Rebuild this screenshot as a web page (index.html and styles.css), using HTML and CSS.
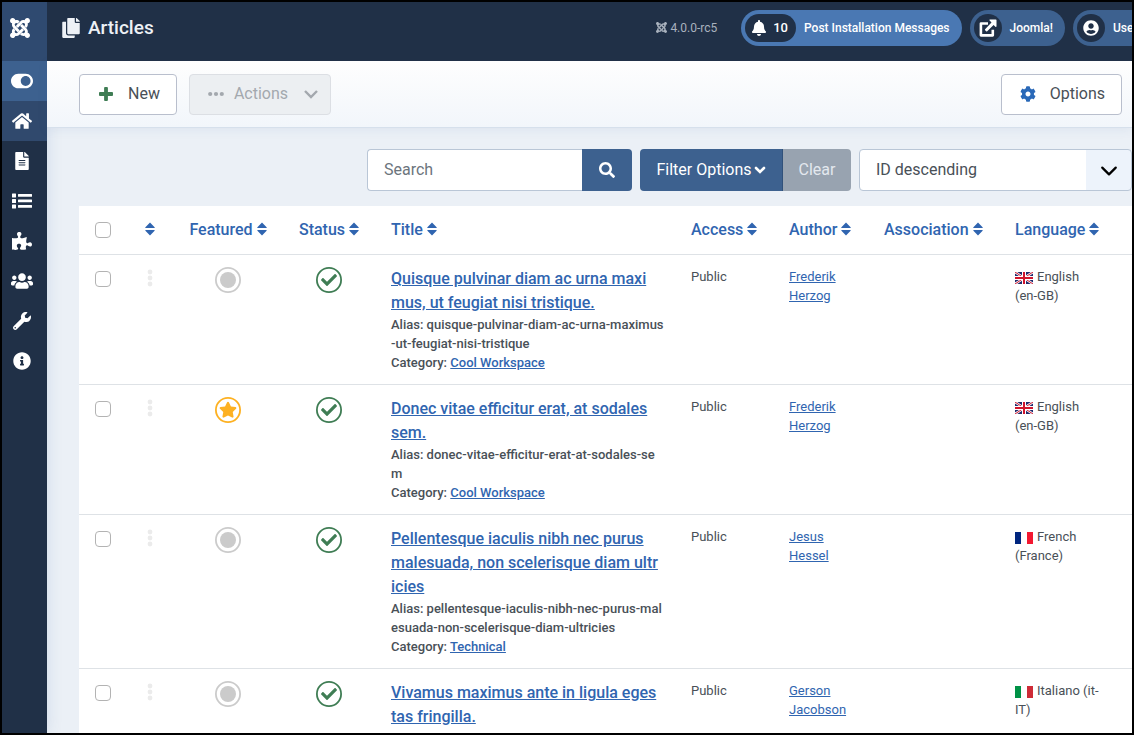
FILE: index.html
```html
<!DOCTYPE html>
<html lang="en">
<head>
<meta charset="utf-8">
<meta name="viewport" content="width=device-width, initial-scale=1">
<title>Articles</title>
<link rel="stylesheet" href="styles.css">
</head>
<body>
<svg class="sprite" aria-hidden="true">
  <symbol id="joomla" viewBox="0 32 448 448"><path d="M.6 92.1C.6 58.8 27.4 32 60.4 32c30 0 54.5 21.9 59.2 50.2 32.6-7.6 67.1.6 96.5 30l-44.3 44.3c-20.5-20.5-42.6-16.3-55.4-3.5-14.3 14.3-14.3 37.9 0 52.2l99.5 99.5-44 44.3c-87.7-87.2-49.7-49.7-99.8-99.7-26.8-26.5-35-64.8-24.8-98.9C20.4 144.6.6 120.7.6 92.1zm129.5 116.4l44.3 44.3c10-10 89.7-89.7 99.7-99.8 14.3-14.3 37.6-14.3 51.9 0 12.8 12.8 17 35-3.5 55.4l44 44.3c31.2-31.2 38.5-67.6 28.9-101.2 29.2-4.1 51.9-29.2 51.9-59.5 0-33.2-26.8-60.1-59.8-60.1-30.3 0-55.4 22.5-59.5 51.6-33.8-9.9-71.7-1.5-98.3 25.1-18.3 19.1-71.1 71.5-99.6 99.9zm266.3 152.2c8.2-32.7-.9-68.5-26.3-93.9-11.8-12.2 5 4.7-99.5-99.7l-44.3 44.3 99.7 99.7c14.3 14.3 14.3 37.6 0 51.9-12.8 12.8-35 17-55.4-3.5l-44 44.3c27.6 30.2 68 38.8 102.7 28 5.5 27.4 29.7 48.1 58.9 48.1 33 0 59.8-26.8 59.8-60.1 0-30.2-22.5-55-51.6-59.1zm-84.3-53.1l-44-44.3c-87 86.4-50.4 50.4-99.7 99.8-14.3 14.3-37.6 14.3-51.9 0-13.1-13.4-16.9-35.3 3.2-55.4l-44-44.3c-30.2 30.2-38 65.2-29.5 98.3-26.7 6-46.2 29.9-46.2 58.2C0 453.2 26.8 480 59.8 480c28.6 0 52.5-19.8 58.6-46.7 32.7 8.2 68.5-.6 94.2-26 32.1-32 12.2-12.4 99.5-99.7z"/></symbol>
  <symbol id="toggle" viewBox="0 0 576 512"><path d="M384 64H192C86 64 0 150 0 256s86 192 192 192h192c106 0 192-86 192-192S490 64 384 64zm0 320c-70.8 0-128-57.3-128-128 0-70.8 57.3-128 128-128 70.8 0 128 57.3 128 128 0 70.8-57.3 128-128 128z"/></symbol>
  <symbol id="home" viewBox="0 0 576 512"><path d="M280.37 148.26L96 300.11V464a16 16 0 0 0 16 16l112.06-.29a16 16 0 0 0 15.92-16V368a16 16 0 0 1 16-16h64a16 16 0 0 1 16 16v95.64a16 16 0 0 0 16 16.05L464 480a16 16 0 0 0 16-16V300L295.67 148.26a12.19 12.19 0 0 0-15.3 0zM571.6 251.47L488 182.56V44.05a12 12 0 0 0-12-12h-56a12 12 0 0 0-12 12v72.61L318.47 43a48 48 0 0 0-61 0L4.34 251.47a12 12 0 0 0-1.6 16.9l25.5 31A12 12 0 0 0 45.15 301l235.22-193.74a12.19 12.19 0 0 1 15.3 0L530.9 301a12 12 0 0 0 16.9-1.6l25.5-31a12 12 0 0 0-1.7-16.93z"/></symbol>
  <symbol id="file" viewBox="0 0 384 512"><path d="M224 136V0H24C10.7 0 0 10.7 0 24v464c0 13.3 10.7 24 24 24h336c13.3 0 24-10.7 24-24V160H248c-13.2 0-24-10.8-24-24zm64 236c0 6.6-5.4 12-12 12H108c-6.6 0-12-5.4-12-12v-8c0-6.6 5.4-12 12-12h168c6.6 0 12 5.4 12 12v8zm0-64c0 6.6-5.4 12-12 12H108c-6.6 0-12-5.4-12-12v-8c0-6.6 5.4-12 12-12h168c6.6 0 12 5.4 12 12v8zm0-72v8c0 6.6-5.4 12-12 12H108c-6.6 0-12-5.4-12-12v-8c0-6.6 5.4-12 12-12h168c6.6 0 12 5.4 12 12zm96-114.1v6.1H256V0h6.1c6.4 0 12.5 2.5 17 7l97.9 98c4.5 4.5 7 10.6 7 16.9z"/></symbol>
  <symbol id="list" viewBox="0 0 20 20"><path d="M.5 2.500h3q.5 0 .5.500v3q0 .5-.5.5h-3q-.5 0-.5-.5v-3q0-.5.5-.5zM.5 8h3q.5 0 .5.5v3q0 .5-.5.5h-3q-.5 0-.5-.5v-3q0-.5.5-.5zM.5 13.500h3q.5 0 .5.500v3q0 .5-.5.5h-3q-.5 0-.5-.5v-3q0-.5.5-.5zM6.500 3h13q.5 0 .5.500v1.800q0 .5-.5.5h-13q-.5 0-.5-.5V3.500q0-.5.5-.5zM6.500 8.500h13q.5 0 .5.500v1.800q0 .5-.5.5h-13q-.5 0-.5-.5V9q0-.5.5-.5zM6.500 14h13q.5 0 .5.500v1.800q0 .5-.5.5h-13q-.5 0-.5-.5V14.500q0-.5.5-.5z"/></symbol>
  <symbol id="puzzle" viewBox="0 0 576 512"><path d="M519.442 288.651c-41.519 0-59.5 31.593-82.058 31.593C377.409 320.244 432 144 432 144s-196.288 80-196.288-3.297c0-35.827 36.288-46.25 36.288-85.985C272 19.216 243.885 0 210.539 0c-34.654 0-66.366 18.891-66.366 56.346 0 41.364 31.711 59.277 31.711 81.75C175.885 207.719 0 166.758 0 166.758v333.237s178.635 41.047 178.635-28.662c0-22.473-40-40.107-40-81.471 0-37.456 29.25-56.346 63.577-56.346 33.673 0 61.788 19.216 61.788 54.717 0 39.735-36.288 50.158-36.288 85.985 0 60.803 129.675 25.73 181.23 25.73 0 0-34.725-120.101 25.827-120.101 35.962 0 46.423 36.152 86.308 36.152C556.712 416 576 387.99 576 354.443c0-34.199-18.962-65.792-56.558-65.792z"/></symbol>
  <symbol id="users" viewBox="0 0 640 512"><path d="M96 224c35.3 0 64-28.7 64-64s-28.7-64-64-64-64 28.7-64 64 28.7 64 64 64zm448 0c35.3 0 64-28.7 64-64s-28.7-64-64-64-64 28.7-64 64 28.7 64 64 64zm32 32h-64c-17.6 0-33.5 7.1-45.1 18.6 40.3 22.1 68.9 62 75.1 109.4h66c17.700 0 32-14.3 32-32v-32c0-35.3-28.7-64-64-64zm-256 0c61.9 0 112-50.1 112-112S381.9 32 320 32 208 82.1 208 144s50.1 112 112 112zm76.8 32h-8.300c-20.800 10-43.900 16-68.500 16s-47.600-6-68.500-16h-8.300C179.600 288 128 339.600 128 403.200V432c0 26.500 21.500 48 48 48h288c26.500 0 48-21.500 48-48v-28.800c0-63.600-51.600-115.200-115.200-115.200zm-223.700-13.400C161.500 263.100 145.600 256 128 256H64c-35.300 0-64 28.700-64 64v32c0 17.700 14.300 32 32 32h65.900c6.300-47.400 34.900-87.300 75.200-109.400z"/></symbol>
  <symbol id="wrench" viewBox="0 0 512 512"><path d="M507.73 109.1c-2.24-9.03-13.54-12.09-20.12-5.51l-74.36 74.36-67.88-11.31-11.31-67.88 74.36-74.36c6.62-6.62 3.43-17.9-5.66-20.16-47.38-11.74-99.55.91-136.58 37.93-39.64 39.64-50.55 97.1-34.05 147.2L18.74 402.76c-24.99 24.99-24.99 65.51 0 90.5 24.99 24.99 65.51 24.99 90.5 0l213.21-213.21c50.12 16.71 107.47 5.68 147.37-34.22 37.07-37.07 49.7-89.32 37.91-136.73zM64 472c-13.25 0-24-10.75-24-24 0-13.26 10.75-24 24-24s24 10.74 24 24c0 13.25-10.75 24-24 24z"/></symbol>
  <symbol id="info" viewBox="0 0 512 512"><path d="M256 8C119.043 8 8 119.083 8 256c0 136.997 111.043 248 248 248s248-111.003 248-248C504 119.083 392.957 8 256 8zm0 110c23.196 0 42 18.804 42 42s-18.804 42-42 42-42-18.804-42-42 18.804-42 42-42zm56 254c0 6.627-5.373 12-12 12h-88c-6.627 0-12-5.373-12-12v-24c0-6.627 5.373-12 12-12h12v-64h-12c-6.627 0-12-5.373-12-12v-24c0-6.627 5.373-12 12-12h64c6.627 0 12 5.373 12 12v100h12c6.627 0 12 5.373 12 12v24z"/></symbol>
  <symbol id="copy" viewBox="0 0 448 512"><path d="M320 448v40c0 13.255-10.745 24-24 24H24c-13.255 0-24-10.745-24-24V120c0-13.255 10.745-24 24-24h72v296c0 30.879 25.121 56 56 56h168zm0-344V0H152c-13.255 0-24 10.745-24 24v368c0 13.255 10.745 24 24 24h272c13.255 0 24-10.745 24-24V128H344c-13.2 0-24-10.8-24-24zm120.971-31.029L375.029 7.029A24 24 0 0 0 358.059 0H352v96h96v-6.059a24 24 0 0 0-7.029-16.97z"/></symbol>
  <symbol id="bell" viewBox="0 0 448 512"><path d="M224 512c35.32 0 63.97-28.65 63.97-64H160.03c0 35.35 28.65 64 63.97 64zm215.39-149.71c-19.32-20.76-55.47-51.99-55.47-154.29 0-77.7-54.48-139.9-127.94-155.16V32c0-17.67-14.32-32-31.98-32s-31.98 14.33-31.98 32v20.84C118.56 68.1 64.08 130.3 64.08 208c0 102.3-36.15 133.53-55.47 154.29-6 6.45-8.66 14.16-8.61 21.71.11 16.4 12.98 32 32.1 32h383.8c19.12 0 32-15.6 32.1-32 .05-7.55-2.61-15.27-8.61-21.71z"/></symbol>
  <symbol id="external" viewBox="0 0 18 18"><path d="M1.200 3.200H9v2.600H3.200v9.300h9.300V10.800h2.600v5.500q0 1.400-1.400 1.400H2q-1.400 0-1.400-1.400V4.600q0-1.400 1.400-1.400zM10.800.4h6q.7 0 .7.7v6.200q-.2 1.100-1.100.4l-1.800-1.800-6.400 6.400q-.5.4-1 0l-1.100-1.100q-.4-.5 0-1L12.500 3.400l-1.900-1.900q-.7-.8.2-1.100z"/></symbol>
  <symbol id="user" viewBox="0 0 496 512"><path d="M248 8C111 8 0 119 0 256s111 248 248 248 248-111 248-248S385 8 248 8zm0 96c48.6 0 88 39.4 88 88s-39.4 88-88 88-88-39.4-88-88 39.4-88 88-88zm0 344c-58.7 0-111.3-26.6-146.5-68.2 18.8-35.4 55.6-59.8 98.5-59.8 2.4 0 4.8.4 7.1 1.1 13 4.2 26.6 6.9 40.9 6.9 14.3 0 28-2.7 40.9-6.9 2.3-.7 4.7-1.1 7.1-1.1 42.9 0 79.7 24.4 98.5 59.8C359.3 421.4 306.7 448 248 448z"/></symbol>
  <symbol id="plus" viewBox="0 0 14 14"><path d="M6 0h2q.9 0 .9.900v4.200h4.200q.9 0 .9.900v2q0 .9-.9.900H8.900v4.200q0 .9-.9.900H6q-.9 0-.9-.9V8.900H.900Q0 8.900 0 8V6q0-.9.900-.9h4.200V.900Q5.100 0 6 0z"/></symbol>
  <symbol id="dots" viewBox="0 0 16 16"><circle cx="2.200" cy="8" r="2.100"/><circle cx="8" cy="8" r="2.100"/><circle cx="13.800" cy="8" r="2.100"/></symbol>
  <symbol id="chevron" viewBox="0 0 16 16"><path d="M2 5l6 6 6-6" fill="none" stroke="currentColor" stroke-width="2.400"/></symbol>
  <symbol id="chevron-thin" viewBox="0 0 16 16"><path d="M2 5l6 6 6-6" fill="none" stroke="currentColor" stroke-width="2" stroke-linecap="round" stroke-linejoin="round"/></symbol>
  <symbol id="chevron-bold" viewBox="0 0 12 12"><path d="M2 4l4 4 4-4" fill="none" stroke="currentColor" stroke-width="2.600" stroke-linecap="round"/></symbol>
  <symbol id="cog" viewBox="0 0 512 512"><path d="M487.4 315.7l-42.6-24.6c4.3-23.2 4.3-47 0-70.2l42.6-24.6c4.9-2.8 7.1-8.6 5.5-14-11.1-35.6-30-67.8-54.7-94.6-3.8-4.1-10-5.1-14.8-2.3L380.8 110c-17.9-15.4-38.5-27.3-60.8-35.1V25.8c0-5.6-3.9-10.5-9.4-11.7-36.7-8.2-74.3-7.8-109.2 0-5.5 1.2-9.4 6.1-9.4 11.7V75c-22.2 7.9-42.8 19.8-60.8 35.1L88.7 85.5c-4.9-2.8-11-1.9-14.8 2.3-24.7 26.700-43.6 58.900-54.700 94.600-1.700 5.400.6 11.200 5.500 14L67.300 221c-4.300 23.200-4.300 47 0 70.200l-42.600 24.600c-4.900 2.800-7.100 8.600-5.500 14 11.100 35.600 30 67.800 54.700 94.600 3.800 4.100 10 5.100 14.800 2.300l42.600-24.600c17.900 15.400 38.500 27.300 60.800 35.100v49.200c0 5.600 3.900 10.500 9.400 11.700 36.700 8.200 74.300 7.800 109.200 0 5.500-1.200 9.400-6.100 9.400-11.700v-49.200c22.200-7.900 42.800-19.800 60.800-35.100l42.600 24.600c4.900 2.800 11 1.900 14.800-2.300 24.700-26.700 43.600-58.900 54.700-94.600 1.500-5.500-.7-11.300-5.600-14.100zM256 336c-44.100 0-80-35.900-80-80s35.900-80 80-80 80 35.900 80 80-35.900 80-80 80z"/></symbol>
  <symbol id="search" viewBox="0 0 512 512"><path d="M505 442.7L405.3 343c-4.5-4.5-10.6-7-17-7H372c27.6-35.3 44-79.7 44-128C416 93.1 322.9 0 208 0S0 93.1 0 208s93.1 208 208 208c48.3 0 92.7-16.4 128-44v16.3c0 6.4 2.5 12.5 7 17l99.7 99.7c9.4 9.4 24.6 9.4 33.9 0l28.3-28.3c9.4-9.4 9.4-24.6.1-34zM208 336c-70.7 0-128-57.2-128-128 0-70.7 57.2-128 128-128 70.7 0 128 57.2 128 128 0 70.7-57.2 128-128 128z"/></symbol>
  <symbol id="sort" viewBox="0 0 10 14"><path d="M5 .500l4.600 4.700q.5.900-.5.900H.900q-1 0-.5-.9zM5 13.500L.4 8.800q-.5-.9.500-.9h8.200q1 0 .5.900z"/></symbol>
  <symbol id="grip" viewBox="0 0 6 18"><circle cx="3" cy="3" r="2.400"/><circle cx="3" cy="9" r="2.400"/><circle cx="3" cy="15" r="2.400"/></symbol>
  <symbol id="unfeatured" viewBox="0 0 26 26"><circle cx="13" cy="13" r="12.100" fill="none" stroke="currentColor" stroke-width="1.800"/><circle cx="13" cy="13" r="8"/></symbol>
  <symbol id="featured" viewBox="0 0 26 26"><circle cx="13" cy="13" r="12.100" fill="none" stroke="currentColor" stroke-width="1.800"/><path transform="translate(4 4.700) scale(.03125)" d="M259.3 17.8L194 150.2 47.9 171.5c-26.2 3.8-36.7 36.1-17.7 54.6l105.7 103-25 145.5c-4.5 26.3 23.2 46 46.4 33.7L288 439.6l130.7 68.7c23.2 12.2 50.9-7.4 46.4-33.7l-25-145.5 105.7-103c19-18.5 8.5-50.8-17.7-54.6L382 150.2 316.7 17.8c-11.7-23.6-45.6-23.9-57.4 0z"/></symbol>
  <symbol id="published" viewBox="0 0 26 26"><circle cx="13" cy="13" r="12.100" fill="none" stroke="currentColor" stroke-width="1.800"/><path transform="translate(5 5) scale(.03125)" d="M173.898 439.404l-166.4-166.4c-9.997-9.997-9.997-26.206 0-36.204l36.203-36.204c9.997-9.998 26.207-9.998 36.204 0L192 312.690 432.095 72.596c9.997-9.997 26.207-9.997 36.204 0l36.203 36.204c9.997 9.997 9.997 26.206 0 36.204l-294.400 294.401c-9.998 9.997-26.207 9.997-36.204-.001z"/></symbol>
  <symbol id="flag-gb" viewBox="0 0 18 12"><path fill="#1f2a6b" d="M0 0h18v12H0z"/><path stroke="#fff" stroke-width="2.400" d="M0 0l18 12M18 0L0 12"/><path stroke="#d0142c" stroke-width="1" d="M0 0l18 12M18 0L0 12"/><path stroke="#fff" stroke-width="4" d="M9 0v12M0 6h18"/><path stroke="#d0142c" stroke-width="2" d="M9 0v12M0 6h18"/></symbol>
  <symbol id="flag-fr" viewBox="0 0 18 12"><path fill="#fff" d="M0 0h18v12H0z"/><path fill="#00267f" d="M0 0h6v12H0z"/><path fill="#f31830" d="M12 0h6v12h-6z"/></symbol>
  <symbol id="flag-it" viewBox="0 0 18 12"><path fill="#fff" d="M0 0h18v12H0z"/><path fill="#009246" d="M0 0h6v12H0z"/><path fill="#ce2b37" d="M12 0h6v12h-6z"/></symbol>
</svg>

<div class="app">
  <nav class="sidebar" aria-label="Main menu">
    <a class="brand" href="#" aria-label="Joomla"><svg class="icon-20"><use href="#joomla"/></svg></a>
    <a class="side-item side-toggle" href="#" aria-label="Toggle menu"><svg class="icon-22"><use href="#toggle"/></svg></a>
    <a class="side-item side-home" href="#" aria-label="Home Dashboard"><svg class="icon-20"><use href="#home"/></svg></a>
    <a class="side-item" href="#" aria-label="Content"><svg class="icon-18"><use href="#file"/></svg></a>
    <a class="side-item" href="#" aria-label="Menus"><svg class="icon-20"><use href="#list"/></svg></a>
    <a class="side-item" href="#" aria-label="Components"><svg class="icon-20"><use href="#puzzle"/></svg></a>
    <a class="side-item" href="#" aria-label="Users"><svg class="icon-22"><use href="#users"/></svg></a>
    <a class="side-item" href="#" aria-label="System"><svg class="icon-18"><use href="#wrench"/></svg></a>
    <a class="side-item" href="#" aria-label="Help"><svg class="icon-18"><use href="#info"/></svg></a>
  </nav>

  <div class="page">
    <header class="header">
      <h1 class="page-title"><svg class="icon-20"><use href="#copy"/></svg>Articles</h1>
      <div class="version"><svg class="icon-11"><use href="#joomla"/></svg>4.0.0-rc5</div>
      <a class="pill pill-bright" href="#"><span class="pill-badge pill-count"><svg class="icon-16"><use href="#bell"/></svg>10</span>Post Installation Messages</a>
      <a class="pill" href="#"><span class="pill-badge"><svg class="icon-18"><use href="#external"/></svg></span>Joomla!</a>
      <button class="pill pill-user" type="button"><span class="pill-badge"><svg class="icon-16"><use href="#user"/></svg></span>User Menu</button>
    </header>

    <div class="toolbar">
      <button class="tool" type="button"><svg class="icon-14 green"><use href="#plus"/></svg>New</button>
      <button class="tool tool-actions" type="button" disabled><svg class="icon-16"><use href="#dots"/></svg>Actions<svg class="icon-16 tool-chevron"><use href="#chevron"/></svg></button>
      <button class="tool tool-options" type="button"><svg class="icon-16 blue"><use href="#cog"/></svg>Options</button>
    </div>

    <main class="main">
      <form class="filters">
        <div class="group">
          <input class="search" type="text" placeholder="Search" aria-label="Search">
          <button class="btn btn-search" type="button" aria-label="Search"><svg class="icon-16"><use href="#search"/></svg></button>
        </div>
        <div class="group">
          <button class="btn btn-filter" type="button">Filter Options<svg class="icon-12"><use href="#chevron-bold"/></svg></button>
          <button class="btn btn-clear" type="button" disabled>Clear</button>
        </div>
        <div class="select-box">
          <select class="select" aria-label="Sort table by"><option>ID descending</option></select>
          <svg class="icon-18 select-arrow"><use href="#chevron-thin"/></svg>
        </div>
      </form>

      <table class="articles">
        <colgroup><col class="c-check"><col class="c-order"><col class="c-featured"><col class="c-status"><col><col class="c-access"><col class="c-author"><col class="c-assoc"><col class="c-lang"></colgroup>
        <thead>
          <tr>
            <th><input class="tick" type="checkbox" aria-label="Check all items"></th>
            <th class="center"><a href="#" aria-label="Ordering"><svg class="sort"><use href="#sort"/></svg></a></th>
            <th class="center"><a href="#">Featured <svg class="sort"><use href="#sort"/></svg></a></th>
            <th class="center"><a href="#">Status <svg class="sort"><use href="#sort"/></svg></a></th>
            <th><a href="#">Title <svg class="sort"><use href="#sort"/></svg></a></th>
            <th><a href="#">Access <svg class="sort"><use href="#sort"/></svg></a></th>
            <th><a href="#">Author <svg class="sort"><use href="#sort"/></svg></a></th>
            <th><a href="#">Association <svg class="sort"><use href="#sort"/></svg></a></th>
            <th><a href="#">Language <svg class="sort"><use href="#sort"/></svg></a></th>
          </tr>
        </thead>
        <tbody>
          <tr>
            <td><input class="tick" type="checkbox" aria-label="Select article 1"></td>
            <td class="center"><svg class="grip"><use href="#grip"/></svg></td>
            <td class="center"><button class="state state-off" type="button" aria-label="Unfeatured"><svg class="icon-26"><use href="#unfeatured"/></svg></button></td>
            <td class="center"><button class="state green" type="button" aria-label="Published"><svg class="icon-26"><use href="#published"/></svg></button></td>
            <td class="title-cell"><div class="title"><a href="#">Quisque pulvinar diam ac urna maximus, ut feugiat nisi tristique.</a></div>
              <div>Alias: quisque-pulvinar-diam-ac-urna-maximus-ut-feugiat-nisi-tristique</div>
              <div>Category: <a href="#">Cool Workspace</a></div></td>
            <td>Public</td>
            <td><a href="#">Frederik Herzog</a></td>
            <td></td>
            <td class="lang"><svg class="flag"><use href="#flag-gb"/></svg>English (en&#8209;GB)</td>
          </tr>
          <tr>
            <td><input class="tick" type="checkbox" aria-label="Select article 2"></td>
            <td class="center"><svg class="grip"><use href="#grip"/></svg></td>
            <td class="center"><button class="state state-star" type="button" aria-label="Featured"><svg class="icon-26"><use href="#featured"/></svg></button></td>
            <td class="center"><button class="state green" type="button" aria-label="Published"><svg class="icon-26"><use href="#published"/></svg></button></td>
            <td class="title-cell"><div class="title"><a href="#">Donec vitae efficitur erat, at sodales sem.</a></div>
              <div>Alias: donec-vitae-efficitur-erat-at-sodales-sem</div>
              <div>Category: <a href="#">Cool Workspace</a></div></td>
            <td>Public</td>
            <td><a href="#">Frederik Herzog</a></td>
            <td></td>
            <td class="lang"><svg class="flag"><use href="#flag-gb"/></svg>English (en&#8209;GB)</td>
          </tr>
          <tr>
            <td><input class="tick" type="checkbox" aria-label="Select article 3"></td>
            <td class="center"><svg class="grip"><use href="#grip"/></svg></td>
            <td class="center"><button class="state state-off" type="button" aria-label="Unfeatured"><svg class="icon-26"><use href="#unfeatured"/></svg></button></td>
            <td class="center"><button class="state green" type="button" aria-label="Published"><svg class="icon-26"><use href="#published"/></svg></button></td>
            <td class="title-cell"><div class="title"><a href="#">Pellentesque iaculis nibh nec purus malesuada, non scelerisque diam ultricies</a></div>
              <div>Alias: pellentesque-iaculis-nibh-nec-purus-malesuada-non-scelerisque-diam-ultricies</div>
              <div>Category: <a href="#">Technical</a></div></td>
            <td>Public</td>
            <td><a href="#">Jesus Hessel</a></td>
            <td></td>
            <td class="lang"><svg class="flag"><use href="#flag-fr"/></svg>French (France)</td>
          </tr>
          <tr>
            <td><input class="tick" type="checkbox" aria-label="Select article 4"></td>
            <td class="center"><svg class="grip"><use href="#grip"/></svg></td>
            <td class="center"><button class="state state-off" type="button" aria-label="Unfeatured"><svg class="icon-26"><use href="#unfeatured"/></svg></button></td>
            <td class="center"><button class="state green" type="button" aria-label="Published"><svg class="icon-26"><use href="#published"/></svg></button></td>
            <td class="title-cell"><div class="title"><a href="#">Vivamus maximus ante in ligula egestas fringilla.</a></div></td>
            <td>Public</td>
            <td><a href="#">Gerson Jacobson</a></td>
            <td></td>
            <td class="lang"><svg class="flag"><use href="#flag-it"/></svg>Italiano (it-IT)</td>
          </tr>
        </tbody>
      </table>
    </main>
  </div>
</div>
</body>
</html>
```
FILE: styles.css
```css
* { box-sizing: border-box; }

body {
  margin: 0;
  font: 400 16px/24px Roboto, "Liberation Sans", sans-serif;
  color: #495057;
  background: #ebf0f6;
}

button, input, select { font: inherit; }
svg { fill: currentColor; flex: none; }
a { color: #3065b0; }

.sprite { display: none; }
.icon-11 { width: 11px; height: 11px; }
.icon-12 { width: 12px; height: 12px; }
.icon-14 { width: 14px; height: 14px; }
.icon-16 { width: 16px; height: 16px; }
.icon-18 { width: 18px; height: 18px; }
.icon-20 { width: 20px; height: 20px; }
.icon-22 { width: 22px; height: 22px; }
.icon-26 { width: 26px; height: 26px; display: block; }
.green { color: #3f7d54; }
.blue { color: #2a69b8; }

.app {
  display: flex;
  height: 100vh;
  overflow: hidden;
  border: 2px solid #000;
}

.sidebar {
  flex: 0 0 45px;
  display: flex;
  flex-direction: column;
  background: #203047;
  box-shadow: 0 0 16px rgba(60, 100, 170, .15);
  padding-bottom: 8px;
}
.brand, .side-item {
  display: flex;
  align-items: center;
  justify-content: center;
  color: #fff;
  padding-right: 5px;
}
.brand { height: 59px; background: #2f4a70; padding-bottom: 8px; padding-right: 9px; }
.side-item { height: 40px; }
.side-toggle { background: #3d618f; }
.side-home { background: #30496d; }

.page { flex: 1; min-width: 0; }

.header {
  position: relative;
  display: flex;
  align-items: center;
  height: 59px;
  gap: 8px;
  padding: 0 0 8px 14px;
  background: #203047;
  color: #fff;
  overflow: hidden;
}
.page-title {
  display: flex;
  align-items: center;
  gap: 7px;
  margin: 0 auto 0 0;
  font-size: 19px;
  font-weight: 500;
  color: #edf1f6;
}
.version {
  display: flex;
  align-items: center;
  gap: 3px;
  margin-right: 16px;
  font-size: 12px;
  color: #a9b2be;
}
.pill {
  display: flex;
  align-items: center;
  gap: 8px;
  height: 36px;
  padding: 0 12px 0 4px;
  border: 0;
  border-radius: 18px;
  background: #3d618f;
  color: #fff;
  font-size: 12px;
  font-weight: 500;
  text-decoration: none;
  white-space: nowrap;
}
.pill-bright { background: #4a78b3; }
.pill-user { width: 59px; padding-right: 0; border-radius: 18px 0 0 18px; overflow: hidden; }
.pill-badge {
  flex: none;
  display: flex;
  align-items: center;
  justify-content: center;
  gap: 6px;
  min-width: 28px;
  height: 28px;
  border-radius: 14px;
  background: #203047;
}
.pill-count { padding: 0 8px 0 6px; font-size: 13px; }

.toolbar {
  display: flex;
  align-items: center;
  gap: 12px;
  height: 67px;
  padding: 0 10px 0 32px;
  background: linear-gradient(#fefefe, #f2f6fb);
  border-bottom: 1px solid #d6e0ec;
  box-shadow: 0 2px 10px rgba(60, 100, 160, .08);
}
.tool {
  display: flex;
  align-items: center;
  gap: 15px;
  height: 41px;
  padding: 0 16px 0 19px;
  border: 1px solid #b9bfcd;
  border-radius: 4px;
  background: #fff;
  color: #495057;
}
.tool-actions {
  gap: 10px;
  padding: 0 11px 0 18px;
  border-color: #dcdfe4;
  background: #eceff2;
  color: #a3a8ae;
}
.tool-chevron { margin-left: 5px; }
.tool-options { margin-left: auto; gap: 14px; padding-left: 18px; }

.main { padding: 21px 0 0 32px; }
.filters { display: flex; justify-content: flex-end; gap: 8px; margin-bottom: 15px; }
.group { display: flex; }
.search {
  width: 215px;
  height: 42px;
  padding: 0 16px 2px;
  border: 1px solid #b9c6d6;
  border-right: 0;
  border-radius: 4px 0 0 4px;
  background: #fff;
  color: #495057;
}
.search::placeholder { color: #6c757d; opacity: 1; }
.btn {
  display: flex;
  align-items: center;
  justify-content: center;
  gap: 2px;
  height: 42px;
  border: 0;
  background: #3d618f;
  color: #fff;
}
.btn-search { width: 50px; border-radius: 0 4px 4px 0; }
.btn-filter { width: 143px; border-radius: 4px 0 0 4px; border-right: 1px solid #31517a; }
.btn-clear { width: 68px; border-radius: 0 4px 4px 0; background: #98a3b0; color: #e3e8ee; }
.select-box { position: relative; width: 273px; }
.select {
  appearance: none;
  width: 100%;
  height: 42px;
  padding: 0 48px 0 16px;
  border: 1px solid #b9c6d6;
  border-radius: 4px;
  background: linear-gradient(90deg, #fff calc(100% - 45px), #edf3fb calc(100% - 45px));
  color: #495057;
}
.select-arrow { position: absolute; right: 14px; top: 13px; color: #000; pointer-events: none; }

.articles {
  width: 100%;
  table-layout: fixed;
  border-collapse: separate;
  border-spacing: 0;
  background: #fff;
  font-size: 13px;
  line-height: 19px;
}
.c-check { width: 48px; }
.c-order { width: 46px; }
.c-featured { width: 110px; }
.c-status { width: 92px; }
.c-access { width: 98px; }
.c-author { width: 95px; }
.c-assoc { width: 131px; }
.c-lang { width: 133px; }

.articles th, .articles td { text-align: left; border-bottom: 1px solid #dee2e6; }
.articles th {
  height: 49px;
  padding: 0 0 0 16px;
  font-size: 16px;
  line-height: 24px;
  font-weight: 500;
  white-space: nowrap;
}
.articles th a { text-decoration: none; }
.articles td { padding: 12px 16px; vertical-align: top; }
.articles .center { padding-left: 0; padding-right: 0; text-align: center; }
.articles .lang { padding-right: 32px; }
.articles .title-cell { padding-right: 10px; word-break: break-all; font-weight: 500; }

.sort { width: 10px; height: 14px; vertical-align: -1px; }
.grip { width: 6px; height: 18px; margin-top: 2px; color: #ebebeb; }
.tick {
  appearance: none;
  display: block;
  width: 16px;
  height: 16px;
  margin: 0;
  border: 1px solid #b3b3b3;
  border-radius: 4px;
  background: #fff;
}
td .tick { margin-top: 4px; }
.state { padding: 0; border: 0; background: none; vertical-align: top; }
.state-off { color: #cbcbcb; }
.state-star { color: #fdb122; }
.title { padding-right: 6px; font-size: 16px; line-height: 24px; }
.flag { width: 18px; height: 12px; margin-right: 4px; vertical-align: -3px; }
```
